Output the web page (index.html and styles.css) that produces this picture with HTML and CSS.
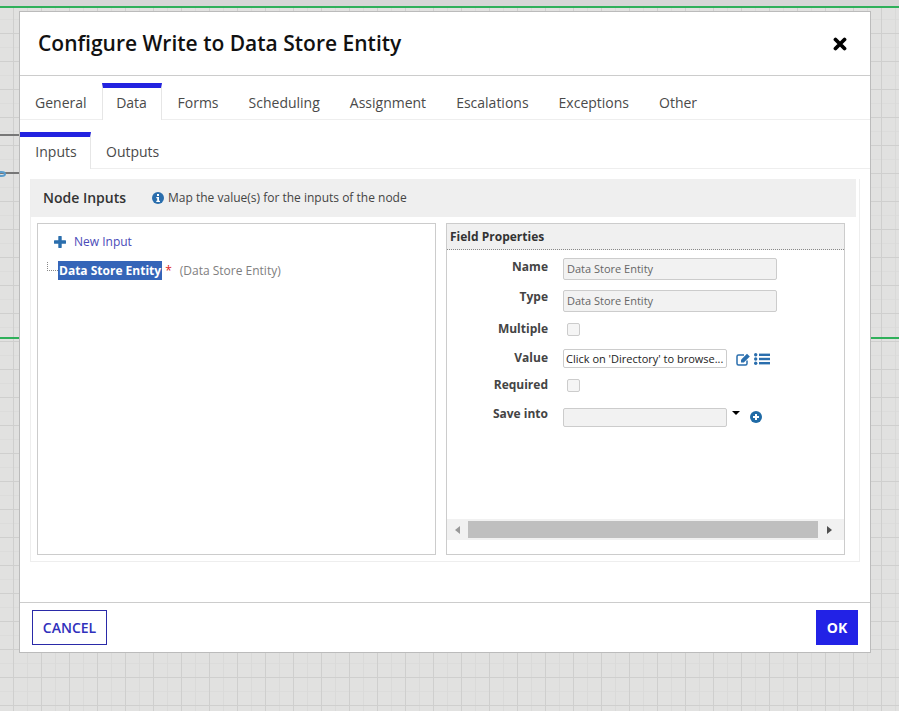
FILE: index.html
```html
<!DOCTYPE html>
<html lang="en">
<head>
  <meta charset="UTF-8" />
  <title>Configure Write to Data Store Entity</title>
  <link rel="stylesheet" href="styles.css">
</head>
<body>

  <!-- Process canvas behind the dialog -->
  <div class="canvas-top"></div>
  <div class="wire wire-green"></div>
  <div class="wire wire-grey-1"></div>
  <div class="wire wire-grey-2"></div>
  <div class="wire-dot"></div>

  <div class="dialog">
    <div class="dialog-head">
      <h1>Configure Write to Data Store Entity</h1>
      <svg class="close-icon" viewBox="0 0 14 14"><path d="M2.5 2.5 11.5 11.5M11.5 2.5 2.5 11.5" stroke="#000" stroke-width="3.8" stroke-linecap="round"/></svg>
    </div>

    <div class="tabs tabs-main">
      <a class="tab">General</a>
      <a class="tab active">Data</a>
      <a class="tab">Forms</a>
      <a class="tab">Scheduling</a>
      <a class="tab">Assignment</a>
      <a class="tab">Escalations</a>
      <a class="tab">Exceptions</a>
      <a class="tab">Other</a>
    </div>

    <div class="tabs tabs-sub">
      <a class="tab active">Inputs</a>
      <a class="tab">Outputs</a>
    </div>

    <div class="panel">
      <div class="panel-head">
        <span class="panel-title">Node Inputs</span>
        <svg class="info-icon" viewBox="0 0 12 12"><circle cx="6" cy="6" r="6" fill="#2a6ead"/><rect x="5" y="2" width="2" height="2" fill="#fff"/><path d="M4.3 5H7V8.8H8V10H4.3V8.8H5.2V6.2H4.3Z" fill="#fff"/></svg>
        <span class="panel-hint">Map the value(s) for the inputs of the node</span>
      </div>

      <div class="panel-body">
        <div class="tree-box">
          <div class="new-input">
            <svg class="plus-icon" viewBox="0 0 12 12"><path d="M6 1V11M1 6H11" stroke="#2a6ead" stroke-width="3.4" stroke-linecap="round"/></svg>
            <span>New Input</span>
          </div>
          <div class="tree-row">
            <span class="tree-line"></span>
            <span class="tree-selected">Data Store Entity</span>
            <span class="required-mark">*</span>
            <span class="tree-type">(Data Store Entity)</span>
          </div>
        </div>

        <div class="props-box">
          <div class="props-head">Field Properties</div>
          <div class="props-form">
            <div class="prop-row row-name">
              <label>Name</label>
              <div class="fake-input disabled wide">Data Store Entity</div>
            </div>
            <div class="prop-row row-type">
              <label>Type</label>
              <div class="fake-input disabled wide">Data Store Entity</div>
            </div>
            <div class="prop-row row-multiple">
              <label>Multiple</label>
              <div class="fake-check"></div>
            </div>
            <div class="prop-row row-value">
              <label>Value</label>
              <div class="fake-input narrow">Click on 'Directory' to browse...</div>
              <svg class="edit-icon" viewBox="0 0 15 13"><path d="M11 7.5V10.5A1.5 1.5 0 0 1 9.500 12H2.500A1.500 1.500 0 0 1 1 10.500V3.500A1.500 1.500 0 0 1 2.500 2H8" fill="none" stroke="#2a6ead" stroke-width="1.500"/><path d="M5 6.800 11 .8 13.800 3.600 7.800 9.600H5Z" fill="#2a6ead"/></svg>
              <svg class="list-icon" viewBox="0 0 16 12"><g fill="#2a6ead"><circle cx="1.700" cy="1.800" r="1.700"/><circle cx="1.700" cy="6" r="1.700"/><circle cx="1.700" cy="10.200" r="1.700"/><rect x="5" y=".6" width="11" height="2.400"/><rect x="5" y="4.800" width="11" height="2.400"/><rect x="5" y="9" width="11" height="2.400"/></g></svg>
            </div>
            <div class="prop-row row-required">
              <label>Required</label>
              <div class="fake-check"></div>
            </div>
            <div class="prop-row row-save">
              <label>Save into</label>
              <div class="fake-input disabled narrow"></div>
              <span class="caret"></span>
              <svg class="add-icon" viewBox="0 0 12 12"><circle cx="6" cy="6" r="6" fill="#1f6aa5"/><path d="M6 3V9M3 6H9" stroke="#fff" stroke-width="2"/></svg>
            </div>
          </div>
          <div class="scrollbar">
            <span class="arrow arrow-left"></span>
            <div class="thumb"></div>
            <span class="arrow arrow-right"></span>
          </div>
        </div>
      </div>
    </div>

    <div class="dialog-foot">
      <button class="btn-cancel">CANCEL</button>
      <button class="btn-ok">OK</button>
    </div>
  </div>

</body>
</html>
```

FILE: styles.css
```css
* {
  margin: 0;
  padding: 0;
  box-sizing: border-box;
}

body {
  font-family: 'Open Sans', 'Noto Sans', sans-serif;
  width: 899px;
  height: 711px;
  overflow: hidden;
  position: relative;
  padding: 11px 0 0 19px;
  background-color: #e1e1e0;
  background-image:
    linear-gradient(to right, #cfcfce 1px, transparent 1px),
    linear-gradient(to bottom, #cfcfce 1px, transparent 1px),
    linear-gradient(to right, #dadad9 1px, transparent 1px),
    linear-gradient(to bottom, #dcdcdb 1px, transparent 1px);
  background-size: 28px 28px, 28px 28px, 14px 14px, 14px 14px;
  background-position: 13px 0, 0 5px, 13px 0, 0 5px;
}

/* Canvas bits behind the dialog */
.canvas-top {
  position: absolute;
  top: 0;
  left: 0;
  width: 100%;
  height: 8px;
  background: #d6d6d6;
  border-bottom: 2px solid #2fb05a;
}

.wire {
  position: absolute;
  left: 0;
}

.wire-green {
  top: 337px;
  width: 100%;
  height: 2px;
  background: #2fb05a;
}

.wire-grey-1 {
  top: 134px;
  width: 19px;
  height: 2px;
  background: #777;
}

.wire-grey-2 {
  top: 172px;
  width: 19px;
  height: 2px;
  background: #777;
}

.wire-dot {
  position: absolute;
  left: -3px;
  top: 171px;
  width: 9px;
  height: 6px;
  border-radius: 50%;
  border: 2px solid #5a9ccc;
}

.dialog {
  position: relative;
  width: 852px;
  height: 642px;
  background: #fff;
  border: 1px solid #bbb;
  display: flex;
  flex-direction: column;
}

.dialog-head {
  height: 64px;
  padding: 0 23px 2px 18px;
  border-bottom: 1px solid #ccc;
  display: flex;
  align-items: center;
  justify-content: space-between;
  flex-shrink: 0;
}

h1 {
  font-size: 21px;
  font-weight: 600;
  color: #111;
}

.close-icon {
  width: 14px;
  height: 14px;
  margin-top: 2px;
}

.tabs {
  display: flex;
  border-bottom: 1px solid #eee;
  flex-shrink: 0;
}

.tab {
  font-size: 14px;
  color: #4a4a4a;
  display: flex;
  align-items: center;
  justify-content: center;
}

.tab.active {
  border-top: 5px solid #2222e0;
  border-left: 1px solid #e6e6e6;
  border-right: 1px solid #e6e6e6;
  margin-bottom: -1px;
  margin-right: 1px;
  background: #fff;
}

.tabs-main {
  height: 44px;
  padding-top: 7px;
}

.tabs-main .tab {
  padding: 3px 15px 0;
}

.tabs-main .tab.active {
  padding: 0 15px 3px;
  width: 60px;
}

.tabs-sub {
  height: 49px;
  padding-top: 12px;
}

.tabs-sub .tab {
  padding: 3px 15px 0 14px;
}

.tabs-sub .tab.active {
  padding: 0 0 4px 2px;
  width: 71px;
  border-left: 0;
}

.panel {
  margin: 10px 10px 0;
  width: 830px;
  height: 383px;
  border: 1px solid #eee;
  border-top: 0;
  flex-shrink: 0;
}

.panel-head {
  height: 38px;
  width: 825px;
  background: #efefef;
  display: flex;
  align-items: center;
  padding: 0 0 1px 12px;
}

.panel-title {
  font-size: 14px;
  font-weight: 600;
  color: #333;
}

.info-icon {
  width: 12px;
  height: 12px;
  margin-left: 26px;
}

.panel-hint {
  font-size: 12px;
  color: #444;
  margin-left: 4px;
}

.panel-body {
  display: flex;
  gap: 10px;
  padding: 6px 0 0 6px;
}

.tree-box,
.props-box {
  width: 399px;
  height: 332px;
  border: 1px solid #ccc;
}

.tree-box {
  padding: 9px 0 0 9px;
}

.new-input {
  display: flex;
  align-items: center;
  height: 17px;
  padding-left: 7px;
  font-size: 12px;
  color: #4a4ab8;
}

.plus-icon {
  width: 12px;
  height: 12px;
  margin-right: 8px;
}

.tree-row {
  display: flex;
  align-items: center;
  height: 20px;
  margin-top: 10px;
  font-size: 12px;
}

.tree-line {
  width: 11px;
  height: 9px;
  margin-bottom: 8px;
  border-left: 1px dotted #888;
  border-bottom: 1px dotted #888;
}

.tree-selected {
  background: #3565b8;
  color: #fff;
  font-weight: 700;
  font-size: 12px;
  line-height: 19px;
  padding: 0 1px;
}

.required-mark {
  color: #d22;
  margin-left: 3px;
}

.tree-type {
  color: #808080;
  margin-left: 8px;
}

.props-head {
  height: 26px;
  background: #f0f0f0;
  border-bottom: 1px dotted #888;
  font-size: 12px;
  font-weight: 700;
  color: #333;
  padding: 4px 0 0 3px;
}

.props-form {
  height: 269px;
  padding-top: 8px;
}

.prop-row {
  display: flex;
  align-items: flex-start;
}

.prop-row label {
  width: 101px;
  text-align: right;
  font-size: 12px;
  font-weight: 700;
  color: #444;
  margin-right: 15px;
  line-height: 17px;
}

.row-type {
  margin-top: 10px;
}

.row-type label {
  margin-top: -2px;
}

.row-multiple {
  margin-top: 11px;
}

.row-multiple label,
.row-required label,
.row-save label {
  margin-top: -3px;
}

.row-value {
  margin-top: 12px;
}

.row-required {
  margin-top: 11px;
}

.row-save {
  margin-top: 15px;
}

.fake-input {
  font-size: 11px;
  height: 22px;
  line-height: 20px;
  padding-left: 3px;
  border: 1px solid #ccc;
  border-radius: 2px;
  color: #222;
  white-space: nowrap;
  overflow: hidden;
}

.fake-input.disabled {
  background: #f2f2f2;
  color: #666;
}

.wide {
  width: 214px;
}

.narrow {
  width: 164px;
}

.row-value .fake-input {
  height: 19px;
  line-height: 18px;
  padding-left: 2px;
  font-size: 11px;
}

.row-save .fake-input {
  height: 19px;
}

.fake-check {
  width: 13px;
  height: 13px;
  margin-left: 4px;
  border: 1px solid #ccc;
  border-radius: 2px;
  background: #f5f5f5;
}

.edit-icon {
  width: 15px;
  height: 13px;
  margin: 4px 0 0 9px;
}

.list-icon {
  width: 16px;
  height: 12px;
  margin: 4px 0 0 3px;
}

.caret {
  width: 0;
  height: 0;
  margin: 3px 0 0 5px;
  border-left: 4px solid transparent;
  border-right: 4px solid transparent;
  border-top: 4px solid #000;
}

.add-icon {
  width: 12px;
  height: 12px;
  margin: 3px 0 0 10px;
}

.scrollbar {
  height: 21px;
  background: #f1f1f1;
  display: flex;
  align-items: center;
}

.thumb {
  width: 350px;
  height: 17px;
  margin: 0 9px 0 8px;
  background: #bfbfbf;
}

.arrow {
  width: 0;
  height: 0;
  border-top: 4.500px solid transparent;
  border-bottom: 4.500px solid transparent;
}

.arrow-left {
  margin-left: 8px;
  border-right: 5px solid #999;
}

.arrow-right {
  border-left: 5px solid #505050;
}

.dialog-foot {
  margin-top: auto;
  height: 50px;
  border-top: 1px solid #ccc;
  display: flex;
  justify-content: space-between;
  align-items: flex-start;
  padding: 7px 12px 0;
}

button {
  font-family: inherit;
  font-size: 14px;
  font-weight: 600;
  height: 35px;
  cursor: pointer;
}

.btn-cancel {
  width: 75px;
  background: #fff;
  color: #3030bc;
  border: 1px solid #2a2aa8;
}

.btn-ok {
  width: 42px;
  background: #2222e6;
  color: #fff;
  border: none;
  font-weight: 700;
}
```
